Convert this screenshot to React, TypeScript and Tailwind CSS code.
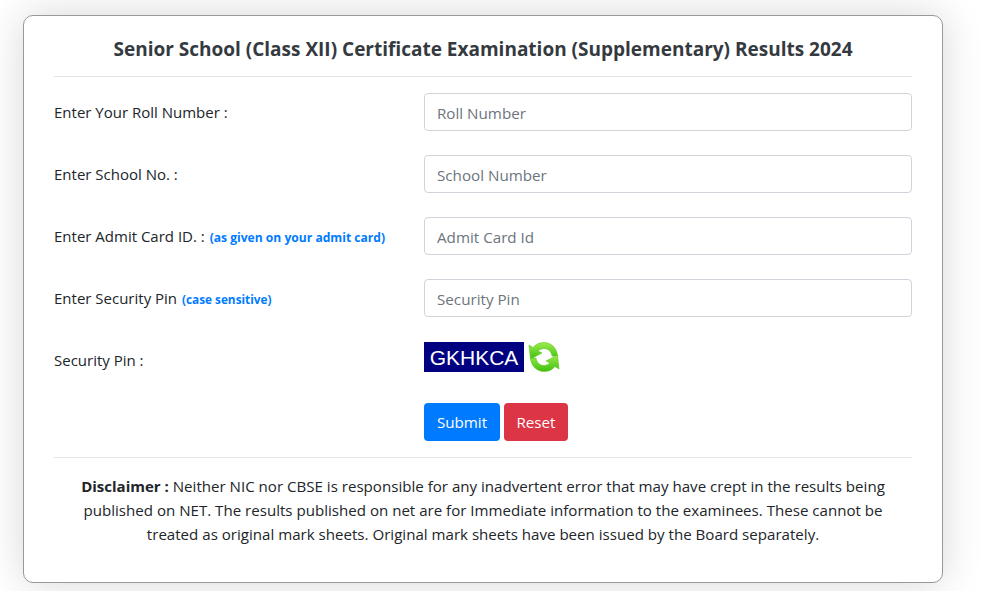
import React from "react";

const font = "font-['Open_Sans','Noto_Sans',sans-serif]";

function Row({ label, placeholder }: { label: React.ReactNode; placeholder: string }) {
  return (
    <div className="mb-[24px] flex h-[38px] items-center">
      <label className="w-[370px] shrink-0 text-[15px] text-[#212529]">{label}</label>
      <input
        placeholder={placeholder}
        className="h-[38px] w-[488px] rounded-[4px] border border-[#ced4da] bg-white px-3 pt-[2px] text-[15.2px] text-[#495057] placeholder:text-[#6c757d]"
      />
    </div>
  );
}

function RefreshIcon() {
  return (
    <svg width="32" height="32" viewBox="0 0 32 32">
      <defs>
        <linearGradient id="g" x1="0" y1="0" x2="0" y2="1">
          <stop offset="0" stopColor="#9cec4c" />
          <stop offset="1" stopColor="#3fc010" />
        </linearGradient>
      </defs>
      <path
        d="M29.500 15C29 7 23 1.500 16 1.500 11 1.500 7.500 3.500 5 6.500L1 4 2.500 18 14 12l-4-2c1.500-1.500 4-2.500 6-2.500 4.500 0 7.500 3.500 8 7.500z"
        fill="url(#g)"
        stroke="#5cc422"
        strokeWidth="0.6"
      />
      <path
        d="M2.500 17C3 25 9 30.500 16 30.500c5 0 8.500-2 11-5l4 2.500-1.500-14L18 20l4 2c-1.500 1.500-4 2.500-6 2.500-4.500 0-7.500-3.500-8-7.500z"
        fill="url(#g)"
        stroke="#5cc422"
        strokeWidth="0.6"
      />
    </svg>
  );
}

export default function App() {
  return (
    <div className={`min-h-[591px] bg-white pl-[23px] pt-[15px] ${font}`}>
      <div className="h-[568px] w-[920px] rounded-[10px] border border-[#999] bg-white px-[30px] pt-[16px] shadow-[0_0_40px_rgba(0,0,0,0.16)]">
        <h1 className="h-[44px] pt-[1px] text-center text-[19px] leading-[32px] font-bold text-[#343a40]">
          Senior School (Class XII) Certificate Examination (Supplementary) Results 2024
        </h1>
        <hr className="mb-[16px] border-[#e5e5e5]" />
        <Row label="Enter Your Roll Number :" placeholder="Roll Number" />
        <Row label="Enter School No. :" placeholder="School Number" />
        <Row
          label={
            <>
              Enter Admit Card ID. : <span className="ml-px text-[12.1px] font-bold text-[#007bff]">(as given on your admit card)</span>
            </>
          }
          placeholder="Admit Card Id"
        />
        <Row
          label={
            <>
              Enter Security Pin <span className="ml-px text-[11.8px] font-bold text-[#007bff]">(case sensitive)</span>
            </>
          }
          placeholder="Security Pin"
        />
        <div className="mb-[24px] flex h-[38px] items-center">
          <div className="w-[370px] shrink-0 text-[15px] text-[#212529]">Security Pin :</div>
          <div className="flex items-center gap-[4px] pb-[6px]">
            <div className="flex h-[30px] w-[100px] items-center justify-center bg-[#000080] pt-[2px] font-['Liberation_Sans',sans-serif] text-[21px] text-white">
              GKHKCA
            </div>
            <RefreshIcon />
          </div>
        </div>
        <div className="flex gap-[4px] pl-[370px]">
          <button className="h-[38px] w-[76px] rounded-[4px] bg-[#007bff] text-[15.2px] text-white">Submit</button>
          <button className="h-[38px] w-[64px] rounded-[4px] bg-[#dc3545] text-[15.2px] text-white">Reset</button>
        </div>
        <hr className="mt-[16px] border-[#e5e5e5]" />
        <p className="mt-[16px] px-[10px] text-center text-[15.1px] leading-[24px] text-[#212529]">
          <b className="text-[15px]">Disclaimer :</b> Neither NIC nor CBSE is responsible for any inadvertent error that may have crept in the results being published on NET. The results published on net are for Immediate information to the examinees. These cannot be treated as original mark sheets. Original mark sheets have been issued by the Board separately.
        </p>
      </div>
    </div>
  );
}
